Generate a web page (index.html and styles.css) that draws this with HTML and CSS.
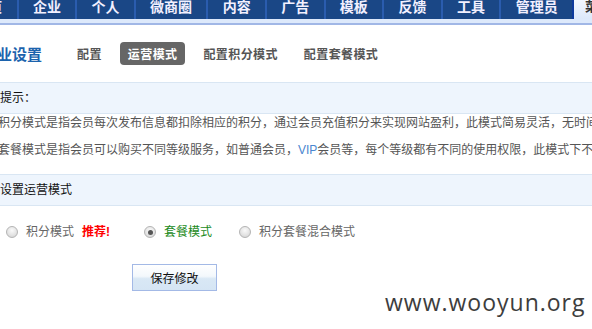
FILE: index.html
```html
<!DOCTYPE html>
<html lang="zh-CN">
<head>
<meta charset="utf-8">
<title>运营模式</title>
<link rel="stylesheet" href="styles.css">
</head>
<body>
<div class="topbar">
  <ul class="nav">
    <li>首页</li>
    <li>企业</li>
    <li>个人</li>
    <li>微商圈</li>
    <li>内容</li>
    <li>广告</li>
    <li>模板</li>
    <li>反馈</li>
    <li>工具</li>
    <li>管理员</li>
  </ul>
  <div class="nav-extra">菜单</div>
</div>
<div class="strip"></div>

<div class="main">
  <div class="titlerow">
    <h2 class="title">企业设置</h2>
    <div class="tabs">
      <a class="tab">配置</a>
      <a class="tab active">运营模式</a>
      <a class="tab">配置积分模式</a>
      <a class="tab">配置套餐模式</a>
    </div>
  </div>

  <div class="section">
    <div class="sec-head">提示：</div>
    <div class="sec-body">
      <p>积分模式是指会员每次发布信息都扣除相应的积分，通过会员充值积分来实现网站盈利，此模式简易灵活，无时间限制。</p>
      <p>套餐模式是指会员可以购买不同等级服务，如普通会员，<span class="vip">VIP</span>会员等，每个等级都有不同的使用权限，此模式下不再扣除积分。</p>
    </div>
  </div>

  <div class="section">
    <div class="sec-head">设置运营模式</div>
    <div class="options">
      <label class="opt"><input type="radio" name="mode"><span class="lbl">积分模式</span><b class="rec">推荐!</b></label>
      <label class="opt"><input type="radio" name="mode" checked><span class="lbl green">套餐模式</span></label>
      <label class="opt"><input type="radio" name="mode"><span class="lbl">积分套餐混合模式</span></label>
    </div>
    <div class="actions">
      <button class="btn">保存修改</button>
    </div>
  </div>
</div>

<div class="watermark">www.wooyun.org</div>
</body>
</html>
```

FILE: styles.css
```css
html, body {
  margin: 0;
  padding: 0;
  background: #ffffff;
  overflow: hidden;
}
body {
  width: 592px;
  height: 329px;
  position: relative;
  font-family: "Liberation Sans", "Noto Sans CJK SC", sans-serif;
  font-size: 12px;
  color: #555;
}

/* top navigation */
.topbar {
  display: flex;
  height: 19px;
  background: linear-gradient(#f2f7fe, #dce8fa);
  overflow: hidden;
}
.nav {
  display: flex;
  flex: none;
  list-style: none;
  margin: 0 0 0 -40px;
  padding: 0;
  background: #1a4786;
  height: 19px;
}
.nav li {
  flex: none;
  padding: 0 14.3px;
  border-right: 2px solid #2a5cae;
  color: #f2f0ff;
  font-family: "Noto Sans CJK SC", sans-serif;
  font-weight: bold;
  font-size: 14px;
  line-height: 12px;
  height: 19px;
  white-space: nowrap;
  box-sizing: border-box;
  overflow: hidden;
}
.nav li:last-child {
  border-right: 2px solid #0d3a9c;
}
.nav-extra {
  flex: none;
  padding-left: 11px;
  font-family: "Noto Sans CJK SC", sans-serif;
  font-weight: bold;
  font-size: 13px;
  line-height: 12px;
  color: #333;
  white-space: nowrap;
}
.strip {
  height: 4px;
  background: #dde9fb;
  border-bottom: 2px solid #a1b7e6;
}

/* main */
.main {
  margin-left: -20px;
}
.titlerow {
  display: flex;
  align-items: center;
  height: 23px;
  padding: 17px 0 17px 5px;
  white-space: nowrap;
}
.title {
  margin: 0 27px 0 -3px;
  font-family: "Noto Sans CJK SC", sans-serif;
  font-size: 15px;
  font-weight: bold;
  color: #1c63ad;
  line-height: 23px;
}
.tabs {
  display: flex;
  gap: 10px;
}
.tab {
  padding: 0 8px;
  height: 23px;
  line-height: 23px;
  font-family: "Noto Sans CJK SC", sans-serif;
  font-weight: bold;
  font-size: 12px;
  letter-spacing: 0.4px;
  color: #555;
  border-radius: 4px;
}
.tab.active {
  background: #666;
  color: #fff;
}

.section {
  border-top: 1px solid #d9e6f3;
}
.sec-head {
  height: 30px;
  line-height: 30px;
  background: #eef5fd;
  border-bottom: 1px solid #d9e6f3;
  padding-left: 20px;
  color: #111;
  font-size: 12px;
  white-space: nowrap;
}
.sec-body {
  padding: 0 0 15px 18px;
  display: flex;
  flex-direction: column;
  gap: 9px;
}
.sec-body p {
  margin: 0;
  line-height: 18px;
  white-space: nowrap;
  color: #555;
}
.vip {
  color: #4a86d0;
}

.options {
  display: flex;
  align-items: center;
  padding: 17px 0 0 26px;
  height: 18px;
  white-space: nowrap;
}
.opt {
  display: flex;
  align-items: center;
  margin-right: 27px;
  line-height: 18px;
}
.opt:first-child {
  margin-right: 34px;
}
.opt input {
  appearance: none;
  -webkit-appearance: none;
  margin: 0 8px 0 0;
  width: 12px;
  height: 12px;
  border-radius: 50%;
  border: 1px solid #b4b4b4;
  background: radial-gradient(circle at 50% 35%, #fafafa 0%, #e2e2e2 60%, #cfcfcf 100%);
  box-sizing: border-box;
  position: relative;
}
.opt input:checked::after {
  content: "";
  position: absolute;
  left: 2.5px;
  top: 2.5px;
  width: 5px;
  height: 5px;
  border-radius: 50%;
  background: #555;
}
.lbl {
  color: #666;
}
.lbl.green {
  color: #1b8a1b;
}
.rec {
  margin-left: 8px;
  color: #ff0000;
  font-weight: bold;
}

.actions {
  padding: 23px 0 0 152px;
}
.btn {
  width: 85px;
  height: 27px;
  border: 1px solid #a3b9e6;
  background: linear-gradient(#ffffff 0%, #f3f8fc 45%, #d9e8f5 55%, #d5e5f4 100%);
  font-family: "Noto Sans CJK SC", sans-serif;
  font-size: 12px;
  color: #111;
  padding: 0;
}

.watermark {
  position: absolute;
  left: 385px;
  top: 286px;
  font-family: "Open Sans", sans-serif;
  font-size: 23px;
  letter-spacing: 1px;
  color: #3d3d3d;
  white-space: nowrap;
}
```
